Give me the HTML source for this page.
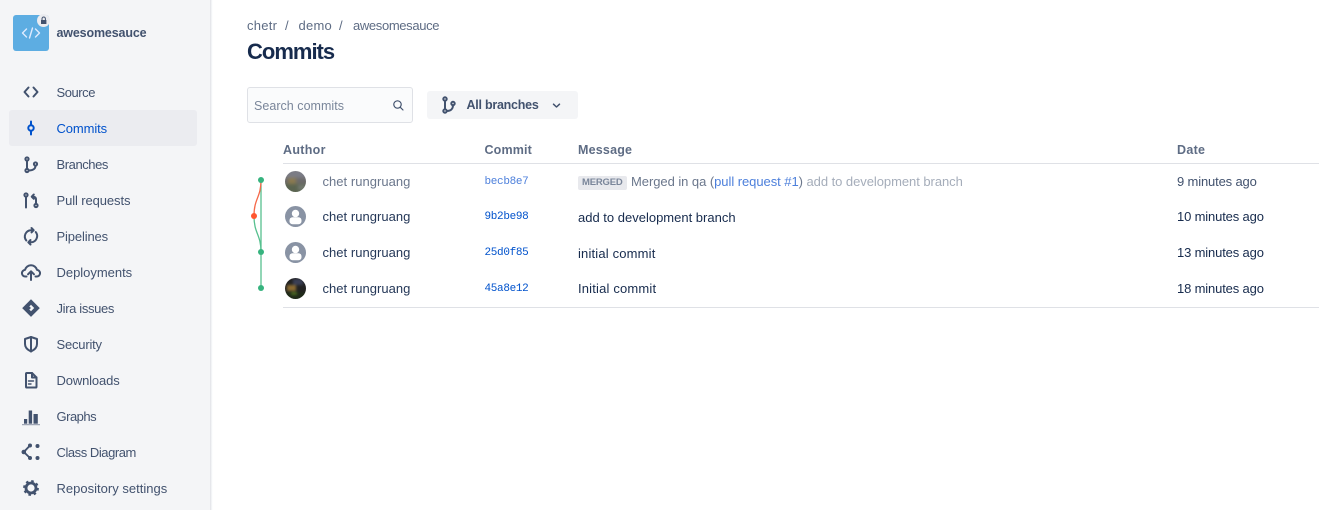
<!DOCTYPE html>
<html><head><meta charset="utf-8"><style>
html,body{margin:0;padding:0;width:1319px;height:510px;overflow:hidden;background:#fff;font-family:"Liberation Sans",sans-serif;font-size:13px}
.t{position:absolute;white-space:nowrap;line-height:16px}
svg{position:absolute;overflow:visible}
.nav{color:#42526e;left:56.5px}
.hd{color:#5e6c84;font-weight:bold;top:141.5px;font-size:12.5px;letter-spacing:.15px}
.au{left:322.5px;color:#253858;letter-spacing:.03px}
.sha{left:484.5px;color:#0052cc;font-family:"Liberation Mono",monospace;font-size:11px;letter-spacing:-.33px}
.msg{left:578px;color:#172b4d}
.dt{left:1177px;color:#172b4d;letter-spacing:-.15px}
.ic{fill:none;stroke:#42526e;stroke-width:2;stroke-linecap:round;stroke-linejoin:round}
</style></head><body>
<div style="position:absolute;left:0;top:0;width:210px;height:510px;background:#f4f5f7"></div>
<div style="position:absolute;left:210px;top:0;width:3px;height:510px;background:linear-gradient(90deg,#dfe1e6,#fafbfc 70%,#fff)"></div>
<div style="position:absolute;left:9px;top:110px;width:188px;height:36px;background:#ebecf0;border-radius:3px"></div>

<div style="position:absolute;left:13px;top:15px;width:36px;height:36px;border-radius:3px;background:#5dade2"></div>
<svg style="left:13px;top:15px" width="36" height="36" fill="none" stroke="#deebff" stroke-width="1.400" stroke-linecap="round" stroke-linejoin="round"><path d="M13.500 14l-4 4 4 4M22.500 14l4 4-4 4M19.500 13l-3 10"/></svg>
<div style="position:absolute;left:37px;top:14px;width:13px;height:13px;border-radius:50%;background:#ebecf0"></div>
<svg style="left:37px;top:14px" width="13" height="13"><path d="M4 6h5.400v4H4z" fill="#42526e"/><path d="M5 6V4.700a1.700 1.700 0 0 1 3.400 0V6" fill="none" stroke="#42526e" stroke-width="1"/></svg>
<div class="t" style="left:56.500px;top:25px;color:#42526e;font-weight:bold;font-size:12.500px;letter-spacing:-.15px">awesomesauce</div>

<div class="t nav" style="top:84.500px;letter-spacing:-.45px">Source</div>
<div class="t nav" style="top:120.500px;color:#0052cc;letter-spacing:-.1px">Commits</div>
<div class="t nav" style="top:156.500px;letter-spacing:-.43px">Branches</div>
<div class="t nav" style="top:192.500px;letter-spacing:-.1px">Pull requests</div>
<div class="t nav" style="top:228.500px;letter-spacing:-.14px">Pipelines</div>
<div class="t nav" style="top:264.500px;letter-spacing:-.02px">Deployments</div>
<div class="t nav" style="top:300.500px;letter-spacing:-.35px">Jira issues</div>
<div class="t nav" style="top:336.500px;letter-spacing:-.2px">Security</div>
<div class="t nav" style="top:372.500px;letter-spacing:-.14px">Downloads</div>
<div class="t nav" style="top:408.500px;letter-spacing:-.5px">Graphs</div>
<div class="t nav" style="top:444.500px;letter-spacing:-.45px">Class Diagram</div>
<div class="t nav" style="top:480.500px;letter-spacing:.01px">Repository settings</div>

<svg class="ic" style="left:19px;top:80px" width="24" height="24"><path d="M9.500 7.500L5.500 12l4 4.500M14.500 7.500L18.500 12l-4 4.500"/></svg>
<svg style="left:19px;top:116px" width="24" height="24" fill="none" stroke="#0052cc" stroke-width="2" stroke-linecap="round"><circle cx="12" cy="12" r="2.700"/><path d="M12 5.500v3.800M12 14.700v3.800"/></svg>
<svg class="ic" style="left:19px;top:152px" width="24" height="24" stroke-width="1.700"><circle cx="8" cy="7" r="1.600"/><circle cx="8" cy="18.500" r="1.600"/><circle cx="16.500" cy="12" r="1.600"/><path d="M8 8.600v8.300M9.600 18.500c4 0 6.900-1.500 6.900-4.900"/></svg>
<svg class="ic" style="left:19px;top:188px" width="24" height="24" stroke-width="1.700"><circle cx="7" cy="7" r="1.600"/><path d="M7 8.600V19.500"/><circle cx="17" cy="17.500" r="1.600"/><path d="M17 15.900V11.500c0-1.800-1-2.800-2.800-2.800H13M14.800 6.500L12.700 8.700l2.100 2.100"/></svg>
<svg class="ic" style="left:19px;top:224px" width="24" height="24" stroke-width="1.700"><path d="M7.300 16.500A6.300 6.300 0 0 1 12 6.200h2.300M12.500 4L14.700 6.200l-2.200 2.200M16.700 8A6.300 6.300 0 0 1 12 18.300H9.700M11.500 16L9.300 18.300l2.200 2.200"/></svg>
<svg class="ic" style="left:19px;top:260px" width="24" height="24" stroke-width="1.800"><path d="M7.500 16.500H6.500a3.300 3.300 0 0 1-.5-6.600 6.200 6.200 0 0 1 12 0 3.300 3.300 0 0 1-.5 6.600h-1M12 11.500V20M9 14.300L12 11.300l3 3"/></svg>
<svg style="left:19px;top:296px" width="24" height="24"><path d="M12 3.300l8.800 8.800-8.800 8.800-8.800-8.800z" fill="#42526e"/><path d="M12 8.800L15.200 12 12 15.200 10.300 13.500 12 12 10.300 10.500z" fill="#f4f5f7"/></svg>
<svg class="ic" style="left:19px;top:332px" width="24" height="24"><path d="M12 5l6 2v5c0 3.700-2.800 6-6 7.500-3.200-1.500-6-3.800-6-7.500V7z"/><path d="M12 5v14.500"/></svg>
<svg class="ic" style="left:19px;top:368px" width="24" height="24"><path d="M7 5.800a.8.8 0 0 1 .8-.8H13l4.500 4.500v9.200a.8.8 0 0 1-.8.8H7.800a.8.8 0 0 1-.8-.8z"/><path d="M9.500 13h5M9.500 16h2.500" stroke-width="1.400"/><path d="M13 5v4.500h4.500"/></svg>
<svg style="left:19px;top:404px" width="24" height="24" fill="#42526e"><rect x="5" y="15" width="3.200" height="4.700"/><rect x="9.700" y="6.500" width="3.400" height="13.200"/><rect x="14.500" y="10" width="4.300" height="9.700"/><rect x="3" y="20.200" width="18" height="1" opacity=".6"/></svg>
<svg style="left:19px;top:440px" width="24" height="24" fill="#42526e"><circle cx="4.800" cy="12" r="2.300"/><circle cx="11" cy="5.500" r="2"/><circle cx="11" cy="18" r="2"/><circle cx="18.500" cy="18" r="2"/><circle cx="18.500" cy="6" r="2"/><path d="M4.800 12L11 5.500M4.800 12L11 18" stroke="#42526e" stroke-width="1.900"/></svg>
<svg style="left:19px;top:476px" width="24" height="24" fill="none" stroke="#42526e"><circle cx="12" cy="12" r="5" stroke-width="2.800"/><circle cx="12" cy="12" r="6.700" stroke-width="2.400" stroke-dasharray="2.500 2.760"/></svg>

<div class="t" style="left:247px;top:18px;color:#5e6c84;letter-spacing:.25px">chetr</div>
<div class="t" style="left:285px;top:18px;color:#5e6c84">/</div>
<div class="t" style="left:298.500px;top:18px;color:#5e6c84;letter-spacing:.25px">demo</div>
<div class="t" style="left:339px;top:18px;color:#5e6c84">/</div>
<div class="t" style="left:353px;top:18px;color:#5e6c84;letter-spacing:-.35px">awesomesauce</div>
<div class="t" style="left:247px;top:38px;color:#172b4d;font-size:22px;line-height:28px;font-weight:bold;letter-spacing:-1px">Commits</div>

<div style="position:absolute;left:247px;top:87px;width:164px;height:34px;background:#fafbfc;border:1px solid #dfe1e6;border-radius:3px"></div>
<div class="t" style="left:254px;top:97.500px;color:#7a869a;font-size:12.500px;letter-spacing:.03px">Search commits</div>
<svg style="left:391px;top:98px" width="14" height="14" fill="none" stroke="#42526e" stroke-width="1.200" stroke-linecap="round"><circle cx="6.500" cy="6.500" r="3.700"/><path d="M9.300 9.300L12 12"/></svg>
<div style="position:absolute;left:427px;top:91px;width:151px;height:28px;background:#f4f5f7;border-radius:3px"></div>
<svg class="ic" style="left:437px;top:93px" width="24" height="24" stroke-width="1.700"><circle cx="8" cy="6" r="1.700"/><circle cx="8" cy="18" r="1.700"/><circle cx="16" cy="10.500" r="1.700"/><path d="M8 8v8M10 18c3.800 0 6-2.300 6-5.700"/></svg>
<div class="t" style="left:466.500px;top:97px;color:#42526e;font-weight:bold;font-size:12.500px;letter-spacing:-.25px">All branches</div>
<svg style="left:552px;top:102px" width="10" height="8" fill="none" stroke="#42526e" stroke-width="1.500" stroke-linecap="round" stroke-linejoin="round"><path d="M1.500 2.200L4.500 5 7.500 2.200"/></svg>

<div class="t hd" style="left:283px;letter-spacing:.3px">Author</div>
<div class="t hd" style="left:484.500px">Commit</div>
<div class="t hd" style="left:578px;letter-spacing:.2px">Message</div>
<div class="t hd" style="left:1177px;letter-spacing:.3px">Date</div>
<div style="position:absolute;left:283px;top:163px;width:1036px;height:1px;background:#dfe1e6"></div>
<div style="position:absolute;left:283px;top:307px;width:1036px;height:1px;background:#dfe1e6"></div>

<svg style="left:245px;top:170px" width="30" height="130" fill="none" stroke-width="1.300">
<path d="M16 10V118" stroke="#57c08f"/>
<path d="M9 46C9 64 16 64 16 82" stroke="#57c08f"/>
<path d="M16 10C16 28 9 28 9 46" stroke="#f5694a"/>
<circle cx="16" cy="10" r="3" fill="#36b37e" stroke="none"/>
<circle cx="9" cy="46" r="3" fill="#ff5630" stroke="none"/>
<circle cx="16" cy="82" r="3" fill="#36b37e" stroke="none"/>
<circle cx="16" cy="118" r="3" fill="#36b37e" stroke="none"/>
</svg>

<svg style="left:285px;top:171px" width="21" height="21"><defs><clipPath id="c1"><circle cx="10.500" cy="10.500" r="10.500"/></clipPath></defs><g clip-path="url(#c1)"><g style="filter:blur(1.500px)"><rect x="-3" y="-3" width="27" height="27" fill="#6c6a6a"/><rect x="-3" y="-3" width="27" height="10" fill="#7b7c85"/><rect x="3" y="7" width="8" height="6" fill="#8a7a50"/><rect x="-3" y="13" width="27" height="11" fill="#5a6450"/><rect x="13" y="14" width="8" height="5" fill="#737a70"/></g></g></svg>
<svg style="left:285px;top:206px" width="21" height="21"><circle cx="10.500" cy="10.500" r="10.500" fill="#8993a4"/><circle cx="10.500" cy="7.500" r="3.700" fill="#fff"/><rect x="4.500" y="11.200" width="12" height="7" rx="3" fill="#fff"/></svg>
<svg style="left:285px;top:242px" width="21" height="21"><circle cx="10.500" cy="10.500" r="10.500" fill="#8993a4"/><circle cx="10.500" cy="7.500" r="3.700" fill="#fff"/><rect x="4.500" y="11.200" width="12" height="7" rx="3" fill="#fff"/></svg>
<svg style="left:285px;top:278px" width="21" height="21"><defs><clipPath id="c2"><circle cx="10.500" cy="10.500" r="10.500"/></clipPath></defs><g clip-path="url(#c2)"><g style="filter:blur(1.200px)"><rect x="-3" y="-3" width="27" height="27" fill="#222"/><rect x="2" y="7" width="9" height="6" fill="#8a6a30"/><rect x="8" y="1" width="10" height="6" fill="#3a3f55"/><rect x="-3" y="14" width="27" height="10" fill="#1f2a18"/><rect x="6" y="14" width="6" height="3" fill="#4a6a20"/></g></g></svg>

<div class="t au" style="top:173.500px;color:#6b778c">chet rungruang</div>
<div class="t au" style="top:208.500px">chet rungruang</div>
<div class="t au" style="top:244.500px">chet rungruang</div>
<div class="t au" style="top:280.500px">chet rungruang</div>

<div class="t sha" style="top:173.500px;color:#4c7fdb">becb8e7</div>
<div class="t sha" style="top:209px">9b2be98</div>
<div class="t sha" style="top:245px">25d0f85</div>
<div class="t sha" style="top:280.500px">45a8e12</div>

<div style="position:absolute;left:578px;top:176px;width:49px;height:14px;background:#e8e9ed;border-radius:2px"></div>
<div class="t" style="left:582px;top:175px;color:#7a869a;font-weight:bold;font-size:9.500px;letter-spacing:-.2px">MERGED</div>
<div class="t" style="left:631px;top:173.500px;color:#6b778c;letter-spacing:-.05px">Merged in qa (<span style="color:#4c7fdb">pull request #1</span>) <span style="color:#a5adba">add to development branch</span></div>
<div class="t msg" style="top:209.500px">add to development branch</div>
<div class="t msg" style="top:245.500px;letter-spacing:.17px">initial commit</div>
<div class="t msg" style="top:280.500px;letter-spacing:.17px">Initial commit</div>

<div class="t dt" style="top:173.500px;color:#42526e">9 minutes ago</div>
<div class="t dt" style="top:208.500px">10 minutes ago</div>
<div class="t dt" style="top:244.500px">13 minutes ago</div>
<div class="t dt" style="top:280.500px">18 minutes ago</div>
</body></html>
